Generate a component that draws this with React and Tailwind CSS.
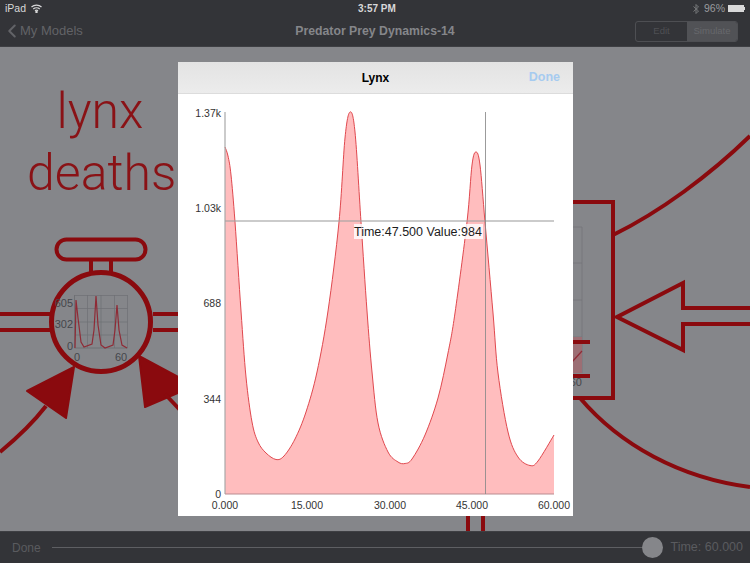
import React from 'react';
import { ChevronLeft } from 'lucide-react';

const RED = '#8a0a0e';

// curve points read off the reference, in page coordinates
const curve = [
  [225, 147], [228, 156], [231, 175], [235, 222], [241, 311], [246, 377], [252, 422], [258, 442],
  [266, 453], [276, 459.5], [284, 456], [295, 439], [306, 412], [317, 372], [328, 311], [339, 222],
  [345, 138], [350, 112], [355, 132], [361, 222], [367, 311], [372, 372], [378, 423], [388, 452],
  [398, 462], [405, 463.5], [412, 459], [425, 435], [438, 398], [448, 353], [455, 313], [467, 222],
  [472, 165], [476, 152], [480, 165], [485, 222], [493, 313], [498, 373], [508, 432], [518, 457],
  [530, 465.5], [538, 461], [554, 435],
];

function smooth(pts) {
  let d = `M${pts[0][0]} ${pts[0][1]}`;
  for (let i = 0; i < pts.length - 1; i++) {
    const p0 = pts[i - 1] || pts[i];
    const p1 = pts[i];
    const p2 = pts[i + 1];
    const p3 = pts[i + 2] || p2;
    const c1 = [p1[0] + (p2[0] - p0[0]) / 6, p1[1] + (p2[1] - p0[1]) / 6];
    const c2 = [p2[0] - (p3[0] - p1[0]) / 6, p2[1] - (p3[1] - p1[1]) / 6];
    d += ` C${c1[0]} ${c1[1]} ${c2[0]} ${c2[1]} ${p2[0]} ${p2[1]}`;
  }
  return d;
}

const linePath = smooth(curve);

function Diagram() {
  return (
    <svg className="absolute inset-0" width="750" height="484" viewBox="0 47 750 484" fill="none">
      {/* left stock */}
      <rect x="56.5" y="239.5" width="89" height="20" rx="10" stroke={RED} strokeWidth="4" />
      <path d="M91 261V273M111 261V273" stroke={RED} strokeWidth="4" />
      <circle cx="101" cy="322" r="49.5" stroke={RED} strokeWidth="5" />
      <path d="M0 314H50M0 330H50M153 314H180M153 330H180" stroke={RED} strokeWidth="4" />
      <path d="M27 391L74 367L66 418Z" fill={RED} stroke={RED} strokeWidth="2" strokeLinejoin="round" />
      <path d="M139 356L180 378V392L145 407Z" fill={RED} stroke={RED} strokeWidth="2" strokeLinejoin="round" />
      <path d="M0 452C17 438 32 424 46 406" stroke={RED} strokeWidth="4" />
      <path d="M165 394L180 410" stroke={RED} strokeWidth="4" />

      {/* left mini chart */}
      <path d="M74.5 295.5H127.5M74.5 308.5H127.5M74.5 322H127.5M74.5 335H127.5M87.5 295V348M101 295V348M114.5 295V348M127.5 295V348" stroke="#6f7074" strokeWidth="0.7" />
      <path d="M74.5 295V348H127.5" stroke="#6f7074" strokeWidth="1" />
      <path d="M75 348L76 300L78 318L81 342L84 347L92 344L94 330L96 296L98 325L101 345L105 348L113 345L115 330L117 305L119 330L122 345L127 348" stroke="#8f2b36" strokeWidth="1.2" />
      <g fill="#46474c" fontSize="11" textAnchor="end">
        <text x="73" y="307">605</text>
        <text x="73" y="328">302</text>
        <text x="73" y="350">0</text>
      </g>
      <g fill="#46474c" fontSize="11" textAnchor="middle">
        <text x="77" y="361">0</text>
        <text x="121" y="361">60</text>
      </g>

      {/* right box */}
      <path d="M560 202H613V398H560" stroke={RED} strokeWidth="4" />
      <path d="M560 227H582V373M560 263H582M560 300H582M560 337H582" stroke="#737478" strokeWidth="0.8" />
      <rect x="560" y="337" width="22" height="36" fill="#9c6e74" />
      <path d="M572 362L582 351" stroke="#8f2b36" strokeWidth="1.2" />
      <path d="M560 342H590M560 376H590" stroke={RED} strokeWidth="4" />
      <text x="582" y="386" fill="#46474c" fontSize="11" textAnchor="end">60</text>
      <path d="M613 235C660 212 710 175 750 136" stroke={RED} strokeWidth="4" />
      <path d="M580 398C620 445 680 478 750 487" stroke={RED} strokeWidth="4" />
      <path d="M750 308H683V283L617 317L683 350V324H750" stroke={RED} strokeWidth="4" />

      {/* pipes under the dialog */}
      <path d="M468 500V531M483 500V531" stroke={RED} strokeWidth="4" />
    </svg>
  );
}

function LynxChart() {
  const yTicks = [['1.37k', 113], ['1.03k', 208], ['688', 303], ['344', 399], ['0', 494]];
  const xTicks = [['0.000', 225], ['15.000', 307], ['30.000', 390], ['45.000', 472], ['60.000', 554]];
  return (
    <svg width="395" height="422" viewBox="178 94 395 422" fill="none">
      <path d={`${linePath} L554 494 L225 494Z`} fill="#ffbdbe" />
      <path d={linePath} stroke="#e0484e" strokeWidth="1" />
      <path d="M225 112V494" stroke="#a8a8a8" strokeWidth="1.2" />
      <path d="M225 494H554" stroke="#b98c90" strokeWidth="1.2" />
      <path d="M225 221H554" stroke="#a3a3a3" strokeOpacity="0.75" strokeWidth="1.5" />
      <path d="M485.5 112V494" stroke="#8a8a8a" strokeOpacity="0.85" strokeWidth="1" />
      <rect x="354" y="224" width="129" height="15" fill="#fff" fillOpacity="0.82" />
      <text x="354" y="236" fill="#1c1c1c" fontSize="12.5">Time:47.500 Value:984</text>
      <g fill="#333" fontSize="10.5" textAnchor="end">
        {yTicks.map(([t, y]) => <text key={t} x="221" y={y + 3.5}>{t}</text>)}
      </g>
      <g fill="#333" fontSize="10.5" textAnchor="middle">
        {xTicks.map(([t, x]) => <text key={t} x={x} y="509">{t}</text>)}
      </g>
    </svg>
  );
}

function WifiIcon() {
  return (
    <svg width="11" height="9" viewBox="0 0 22 18" fill="none" stroke="#d8d8d9" strokeWidth="2.6">
      <path d="M1 6C6.5 1 15.5 1 21 6M4.5 10C8 7 14 7 17.5 10M8 13.5C9.8 12 12.2 12 14 13.5" />
      <circle cx="11" cy="16" r="1.2" fill="#d8d8d9" />
    </svg>
  );
}

function BluetoothIcon() {
  return (
    <svg width="6" height="10" viewBox="0 0 12 20" fill="none" stroke="#77787b" strokeWidth="2">
      <path d="M1 5L11 14L6 19V1L11 6L1 15" />
    </svg>
  );
}

export default function App() {
  return (
    <div className="w-[750px] h-[563px] flex flex-col overflow-hidden bg-[#85868a] font-['Liberation_Sans',sans-serif]">
      {/* status + nav bar */}
      <div className="h-[47px] bg-[#333438] border-b border-[#3e3f43] shrink-0 flex flex-col">
        <div className="h-[16px] pt-[1px] pl-[5px] pr-[5px] flex items-center justify-between relative text-[10.5px] text-[#d8d8d9]">
          <div className="flex items-center gap-[5px]">
            <span>iPad</span>
            <WifiIcon />
          </div>
          <span className="absolute left-[358px] font-bold text-[10px]">3:57 PM</span>
          <div className="flex items-center gap-[3px]">
            <BluetoothIcon />
            <span className="text-[#9a9b9e] ml-[2px]">96%</span>
            <div className="flex items-center">
              <div className="w-[16px] h-[7px] bg-[#d8d8d9]" />
              <div className="w-[1px] h-[3px] bg-[#d8d8d9]" />
            </div>
          </div>
        </div>
        <div className="flex-1 relative flex items-center justify-center">
          <div className="absolute left-[1px] top-[4px] flex items-center text-[13px] text-[#626367]">
            <ChevronLeft size={22} strokeWidth={2.2} color="#626367" />
            <span className="ml-[-3px]">My Models</span>
          </div>
          <span className="text-[12.25px] font-bold text-[#85868a]">Predator Prey Dynamics-14</span>
          <div className="absolute right-[12px] top-[5px] w-[103px] h-[21px] flex border border-[#4e4f53] rounded-[3px] overflow-hidden text-[9.5px] text-[#4f5054]">
            <div className="w-[51px] flex items-center justify-center">Edit</div>
            <div className="flex-1 flex items-center justify-center bg-[#515256] text-[#67686c]">Simulate</div>
          </div>
        </div>
      </div>

      {/* model canvas */}
      <div className="flex-1 relative">
        <Diagram />
        <div className="absolute left-[27px] top-[33px] w-[146px] text-center text-[#8a1216] text-[50px] leading-[62px] font-light font-['Roboto',sans-serif]">
          <div>lynx</div>
          <div>deaths</div>
        </div>

        {/* chart dialog */}
        <div className="absolute left-[178px] top-[15px] w-[395px] h-[454px] bg-white flex flex-col">
          <div className="h-[32px] bg-gradient-to-b from-[#e3e3e3] to-[#ececec] border-b border-[#dcdcdc] relative flex items-center justify-center">
            <span className="text-[12px] font-bold text-black">Lynx</span>
            <span className="absolute right-[13px] text-[12.5px] font-bold text-[#a6cbf0]">Done</span>
          </div>
          <LynxChart />
        </div>
      </div>

      {/* time slider */}
      <div className="h-[32px] bg-[#333438] border-t border-[#3e3f43] shrink-0 flex items-center pl-[12px] pr-[7px]">
        <span className="text-[12px] text-[#5a5b5f]">Done</span>
        <div className="flex-1 flex items-center ml-[11px]">
          <div className="flex-1 h-[1px] bg-[#5e5f63]" />
          <div className="w-[21px] h-[21px] rounded-full bg-[#85868a]" />
        </div>
        <span className="ml-[8px] text-[12.5px] text-[#5a5b5f]">Time: 60.000</span>
      </div>
    </div>
  );
}
